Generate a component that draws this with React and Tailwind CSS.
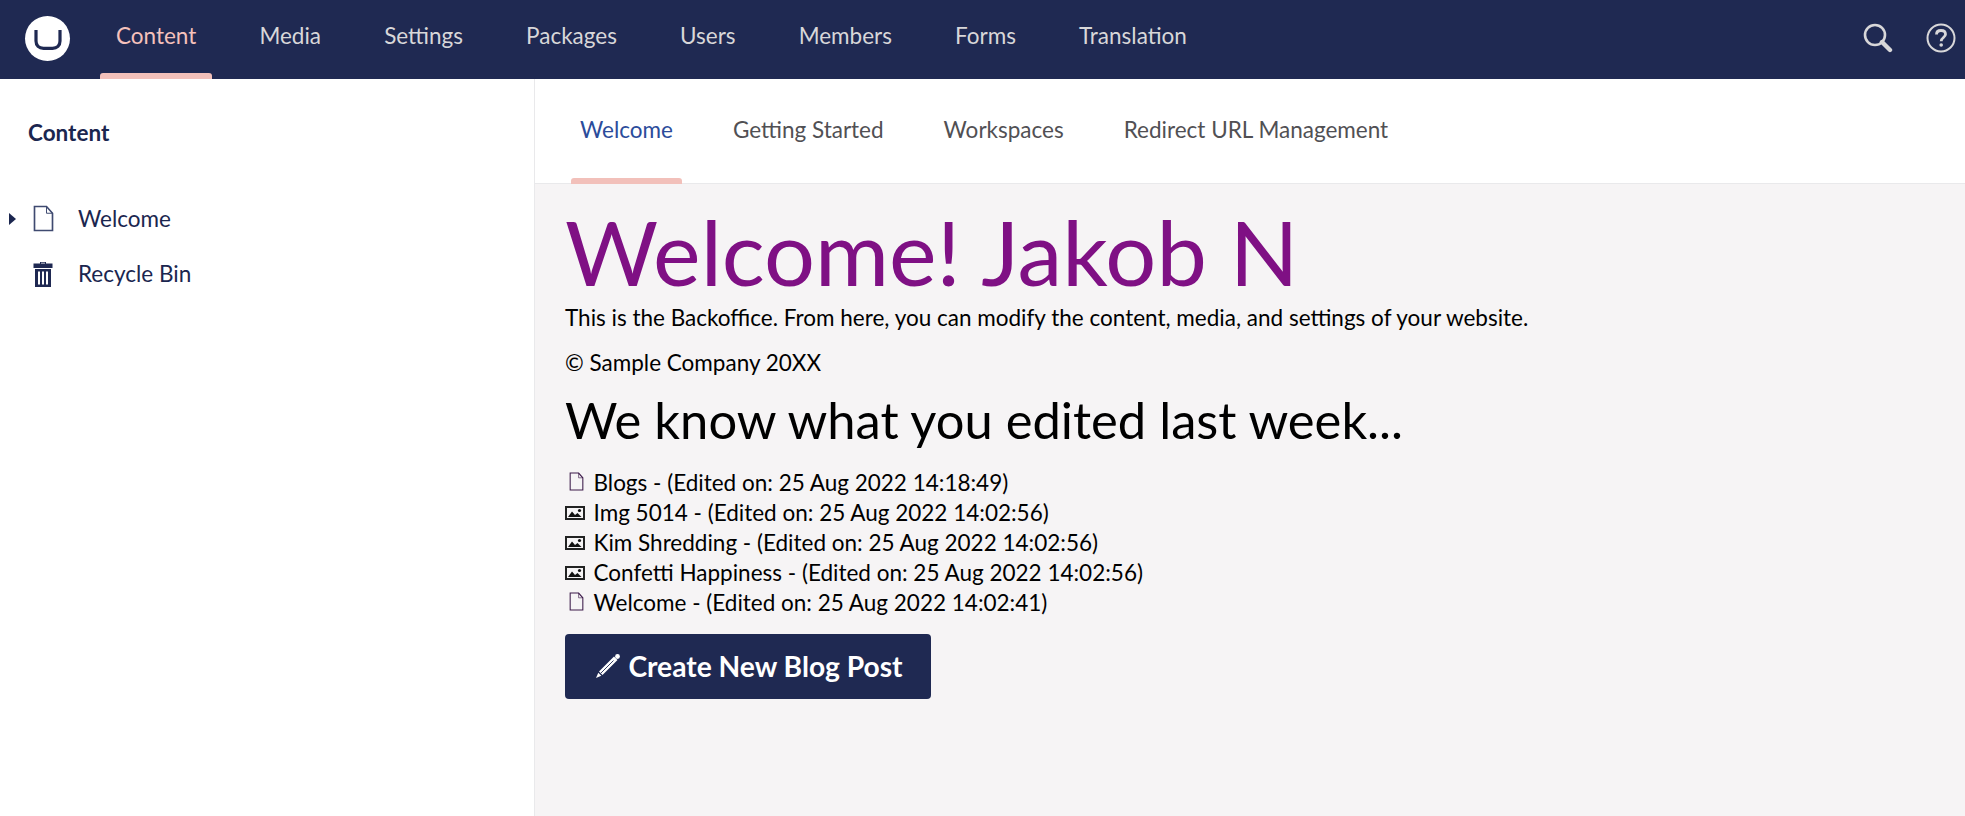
import React from "react";

const nav = ["Content", "Media", "Settings", "Packages", "Users", "Members", "Forms", "Translation"];
const tabs = ["Welcome", "Getting Started", "Workspaces", "Redirect URL Management"];
const rows = [
  ["doc", "Blogs - (Edited on: 25 Aug 2022 14:18:49)"],
  ["img", "Img 5014 - (Edited on: 25 Aug 2022 14:02:56)"],
  ["img", "Kim Shredding - (Edited on: 25 Aug 2022 14:02:56)"],
  ["img", "Confetti Happiness - (Edited on: 25 Aug 2022 14:02:56)"],
  ["doc", "Welcome - (Edited on: 25 Aug 2022 14:02:41)"],
];

function DocIcon({ className, stroke = "#3c1a4a", sw = 1 }) {
  return (
    <svg viewBox="0 0 14 18" className={className} fill="none" stroke={stroke} strokeWidth={sw}>
      <path d="M1 1H9L13 5.5V17H1Z" />
      <path d="M9 1V5.5H13" strokeWidth={sw * 0.6} />
    </svg>
  );
}

function ImgIcon() {
  return (
    <svg viewBox="0 0 20 16" className="w-[20px] h-[16px] shrink-0">
      <rect x="1" y="2" width="18" height="12" fill="none" stroke="#222" strokeWidth="2" />
      <path d="M3 12L7 6.5L10 10L12.5 8L16.5 12Z" fill="#111" />
      <circle cx="14.5" cy="5.5" r="1.6" fill="#111" />
    </svg>
  );
}

export default function App() {
  return (
    <div className="h-[816px] w-full flex flex-col overflow-hidden bg-white font-['Lato','Open_Sans',sans-serif]">
      <header className="h-[79px] bg-[#1f2952] flex items-center shrink-0">
        <div className="ml-[25px] mb-[3px] w-[45px] h-[45px] rounded-full bg-white flex items-center justify-center shrink-0">
          <svg viewBox="0 0 28 20" className="w-[28px] h-[20px] mt-[3px]" fill="none">
            <path d="M2 0V11C2 15.5 5 18.3 9.5 18.3H18.5C23 18.3 26 15.5 26 11V0" stroke="#1f2952" strokeWidth="3.2" />
          </svg>
        </div>
        <nav className="ml-[30px] flex h-full gap-[31.1px]">
          {nav.map((n, i) => (
            <div key={n} className={`relative h-full px-4 flex items-center pb-[8px] text-[22.5px] ${i === 0 ? "text-[#f5c1bc]" : "text-[#d8d7d9]"}`}>
              {n}
              {i === 0 && <span className="absolute left-0 right-0 bottom-0 h-[6px] rounded-t-[3px] bg-[#f2c0ba]" />}
            </div>
          ))}
        </nav>
        <div className="ml-auto mr-[9px] mb-[3px] flex items-center gap-[33px]">
          <svg viewBox="0 0 30 30" className="w-[30px] h-[30px]" fill="none" stroke="#d8d7d9">
            <circle cx="12" cy="12" r="10" strokeWidth="2.6" />
            <path d="M19 19L27 27" strokeWidth="4.4" strokeLinecap="round" />
          </svg>
          <svg viewBox="0 0 30 30" className="w-[30px] h-[30px]" fill="none" stroke="#d8d7d9">
            <circle cx="15" cy="15" r="13.5" strokeWidth="2" />
            <path d="M10.5 11.5C10.5 8.8 12.5 7.5 15 7.5C17.7 7.5 19.5 9 19.5 11.3C19.5 14.5 15.2 14.5 15.2 18.2" strokeWidth="2.8" />
            <circle cx="15.2" cy="22" r="1.8" fill="#d8d7d9" stroke="none" />
          </svg>
        </div>
      </header>
      <div className="flex flex-1 min-h-0">
        <aside className="w-[535px] shrink-0 border-r border-[#e9e9eb] bg-white">
          <div className="pl-[28px] pt-[40px] text-[22.5px] font-bold leading-[28px] text-[#1b264f]">Content</div>
          <div className="mt-[44px] text-[#1b264f] text-[22.5px]">
            <div className="flex items-center h-[55px]">
              <span className="ml-[9px] w-0 h-0 border-y-[6px] border-y-transparent border-l-[7px] border-l-[#1b264f]" />
              <DocIcon className="ml-[17px] w-[21px] h-[27px]" stroke="#3f4a70" sw={1.1} />
              <span className="ml-[24px]">Welcome</span>
            </div>
            <div className="flex items-center h-[55px]">
              <svg viewBox="0 0 20 26" className="ml-[33px] w-[20px] h-[26px]" fill="#1f2952">
                <path d="M7 2.5V1H13V2.5H19.5V7H0.5V2.5ZM8 2.5H12V1.8H8Z" />
                <path fillRule="evenodd" d="M2 8H18V26H2ZM5 10.5V23.5H7V10.5ZM9 10.5V23.5H11V10.5ZM13 10.5V23.5H15V10.5Z" />
              </svg>
              <span className="ml-[25px]">Recycle Bin</span>
            </div>
          </div>
        </aside>
        <main className="flex-1 min-w-0 flex flex-col bg-[#f6f4f5]">
          <div className="h-[105px] bg-white border-b border-[#e9e9eb] flex pl-[36px] gap-[42px] shrink-0">
            {tabs.map((t, i) => (
              <div key={t} className={`relative h-full px-[9px] flex items-center pb-[2px] text-[22.5px] ${i === 0 ? "text-[#2b4c9b]" : "text-[#515054]"}`}>
                {t}
                {i === 0 && <span className="absolute left-0 right-0 -bottom-[1px] h-[6px] rounded-t-[3px] bg-[#f2c0ba]" />}
              </div>
            ))}
          </div>
          <div className="pl-[30px] pt-[18px] text-black">
            <h1 className="text-[90px] leading-[98px] text-[#7f1084]">Welcome! Jakob N</h1>
            <p className="text-[22.5px] leading-[28px] mt-[4px]">This is the Backoffice. From here, you can modify the content, media, and settings of your website.</p>
            <p className="text-[22.5px] leading-[28px] mt-[17px]">© Sample Company 20XX</p>
            <h2 className="text-[50.7px] leading-[58px] mt-[14px]">We know what you edited last week...</h2>
            <div className="mt-[19px] text-[22.5px] leading-[30px]">
              {rows.map(([k, t]) => (
                <div key={t} className="flex items-center h-[30px]">
                  <span className="w-[28.5px] shrink-0 flex justify-start">
                    {k === "doc" ? <DocIcon className="ml-[4px] w-[15px] h-[19px] mb-[3px]" /> : <ImgIcon />}
                  </span>
                  {t}
                </div>
              ))}
            </div>
            <button className="mt-[16px] h-[65px] w-[366px] rounded-[4px] bg-[#1f2952] text-white text-[28.2px] font-bold flex items-center justify-center gap-[7px] pl-[2px]">
              <svg viewBox="0 0 26 26" className="w-[26px] h-[26px] mb-[2px]" fill="white">
                <circle cx="22.5" cy="3.5" r="2.4" />
                <path d="M19 3.5L22.5 7L7.5 22L4 18.5Z" />
                <path d="M3.3 19.7L6.3 22.7L1 25Z" />
                <path d="M18.5 7.5L6 20" stroke="#1f2952" strokeWidth="0.9" />
              </svg>
              Create New Blog Post
            </button>
          </div>
        </main>
      </div>
    </div>
  );
}
